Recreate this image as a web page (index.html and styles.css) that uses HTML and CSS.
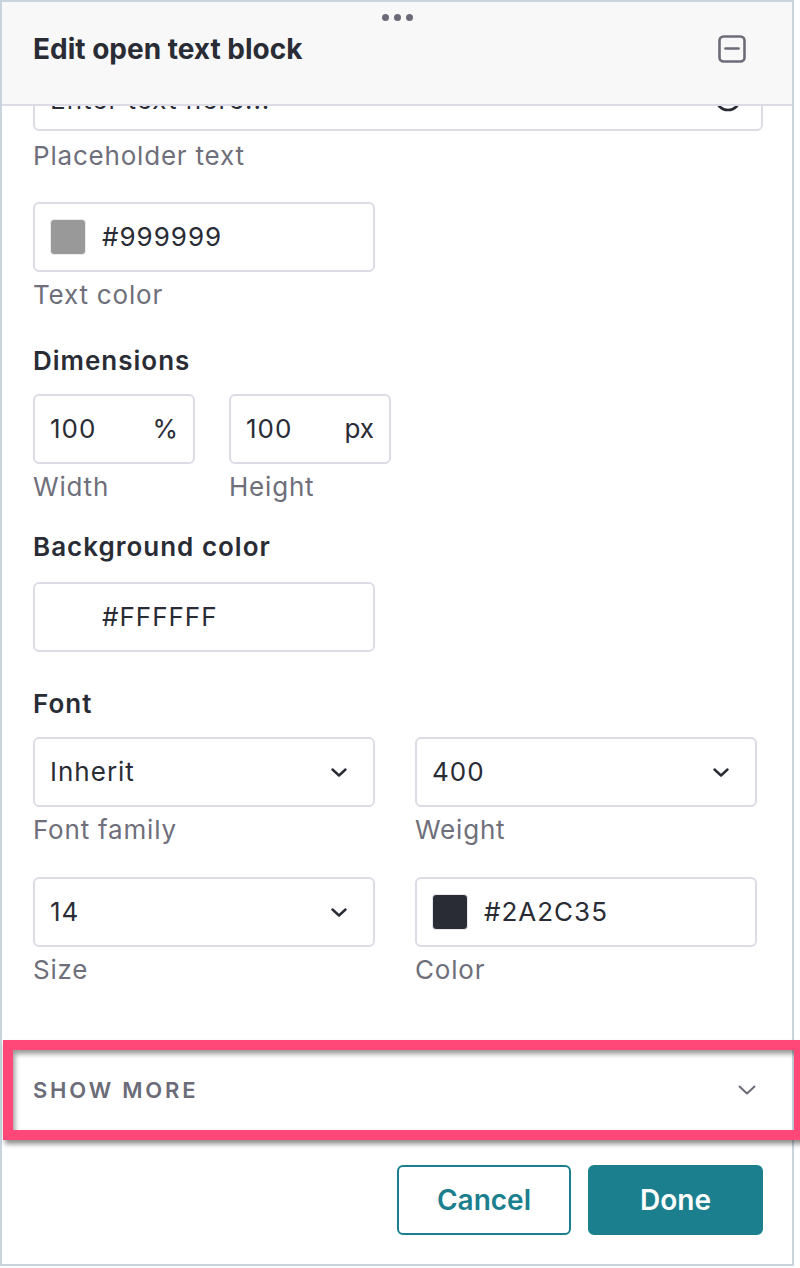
FILE: index.html
```html
<!DOCTYPE html>
<html lang="en">
<head>
<meta charset="utf-8">
<title>Edit open text block</title>
<link rel="stylesheet" href="styles.css">
</head>
<body>
<div class="panel">
  <header class="header">
    <div class="grip"><span></span><span></span><span></span></div>
    <div class="title-row">
      <h1 class="title">Edit open text block</h1>
      <button class="icon-btn" aria-label="Minimize">
        <svg width="28" height="28" viewBox="0 0 28 28"><rect x="1.5" y="1.5" width="25" height="25" rx="4" fill="none" stroke="#6b6c78" stroke-width="2.6"/><line x1="7.5" y1="13.5" x2="20.5" y2="13.5" stroke="#6b6c78" stroke-width="2.6" stroke-linecap="round"/></svg>
      </button>
    </div>
  </header>

  <main class="body">
    <div class="content">
      <div class="input input-top">
        <span class="value">Enter text here...</span>
        <svg class="circle-icon" width="28" height="28" viewBox="0 0 28 28"><circle cx="14" cy="14" r="12" fill="none" stroke="#2a2c35" stroke-width="2.6"/></svg>
      </div>
      <div class="label label-first">Placeholder text</div>

      <div class="input input-narrow mt30">
        <span class="swatch swatch-grey"></span>
        <span class="value">#999999</span>
      </div>
      <div class="label">Text color</div>

      <h2 class="heading mt32">Dimensions</h2>
      <div class="dims">
        <div class="field">
          <div class="input input-unit"><span class="value">100</span><span class="unit">%</span></div>
          <div class="label">Width</div>
        </div>
        <div class="field">
          <div class="input input-unit"><span class="value">100</span><span class="unit">px</span></div>
          <div class="label">Height</div>
        </div>
      </div>

      <h2 class="heading mt26">Background color</h2>
      <div class="input input-narrow mt17">
        <span class="swatch swatch-white"></span>
        <span class="value">#FFFFFF</span>
      </div>

      <h2 class="heading mt34">Font</h2>
      <div class="font-grid">
        <div class="field">
          <div class="input select"><span class="value">Inherit</span>
            <svg class="chev" width="16" height="9" viewBox="0 0 16 9"><path d="M1.5 1.5 L8 7.5 L14.5 1.5" fill="none" stroke="#2a2c35" stroke-width="2.4" stroke-linecap="round" stroke-linejoin="round"/></svg>
          </div>
          <div class="label">Font family</div>
        </div>
        <div class="field">
          <div class="input select"><span class="value">400</span>
            <svg class="chev" width="16" height="9" viewBox="0 0 16 9"><path d="M1.5 1.5 L8 7.5 L14.5 1.5" fill="none" stroke="#2a2c35" stroke-width="2.4" stroke-linecap="round" stroke-linejoin="round"/></svg>
          </div>
          <div class="label">Weight</div>
        </div>
        <div class="field row2">
          <div class="input select"><span class="value">14</span>
            <svg class="chev" width="16" height="9" viewBox="0 0 16 9"><path d="M1.5 1.5 L8 7.5 L14.5 1.5" fill="none" stroke="#2a2c35" stroke-width="2.4" stroke-linecap="round" stroke-linejoin="round"/></svg>
          </div>
          <div class="label">Size</div>
        </div>
        <div class="field row2">
          <div class="input"><span class="swatch swatch-dark"></span><span class="value">#2A2C35</span></div>
          <div class="label">Color</div>
        </div>
      </div>
    </div>
  </main>

  <section class="show-more">
    <span class="show-more-text">SHOW MORE</span>
    <svg class="show-chev" width="18" height="10" viewBox="0 0 18 10"><path d="M1.5 1.5 L9 8.5 L16.5 1.5" fill="none" stroke="#6b6c78" stroke-width="2" stroke-linecap="round" stroke-linejoin="round"/></svg>
    <div class="highlight"></div>
  </section>

  <footer class="footer">
    <button class="btn btn-outline">Cancel</button>
    <button class="btn btn-primary">Done</button>
  </footer>
</div>
</body>
</html>
```

FILE: styles.css
```css
html, body {
  margin: 0;
  padding: 0;
  background: #ffffff;
  overflow: hidden;
}

body {
  font-family: Inter, "Noto Sans", "Liberation Sans", sans-serif;
  color: #2a2c35;
  width: 800px;
  height: 1268px;
}

.panel {
  box-sizing: border-box;
  width: 794px;
  height: 1266px;
  border: 2px solid #c8d5df;
  display: flex;
  flex-direction: column;
  background: #ffffff;
}

/* Header */
.header {
  flex: 0 0 auto;
  box-sizing: border-box;
  height: 104px;
  background: #f8f8f8;
  border-bottom: 2px solid #dddce6;
  padding: 12px 0 0 31px;
}

.grip {
  display: flex;
  justify-content: center;
  gap: 5px;
  height: 7px;
  padding-right: 31px;
}

.grip span {
  width: 7px;
  height: 7px;
  border-radius: 50%;
  background: #6b6c78;
}

.title-row {
  margin-top: 10px;
  height: 36px;
  display: flex;
  align-items: center;
  justify-content: space-between;
}

.title {
  margin: 0;
  font-size: 28px;
  line-height: 36px;
  font-weight: 700;
  color: #2a2c35;
  letter-spacing: 0;
}

.icon-btn {
  border: 0;
  padding: 0;
  background: none;
  width: 28px;
  height: 28px;
  margin-right: 46px;
  display: flex;
}

/* Body */
.body {
  flex: 1 1 auto;
  overflow: hidden;
  padding: 0 29px 0 31px;
}

.content {
  margin-top: -45px;
}

.input {
  box-sizing: border-box;
  height: 70px;
  border: 2px solid #dddce6;
  border-radius: 6px;
  display: flex;
  align-items: center;
  padding: 0 16px 0 15px;
  background: #ffffff;
}

.value {
  font-size: 26px;
  line-height: 32px;
  letter-spacing: 1px;
  color: #2a2c35;
}

.input-top {
  align-items: flex-start;
  padding-top: 21px;
  padding-right: 19px;
  justify-content: space-between;
}

.circle-icon {
  margin-top: 0;
}

.input-narrow {
  width: 342px;
}

.swatch {
  box-sizing: border-box;
  width: 36px;
  height: 36px;
  border-radius: 4px;
  margin-right: 16px;
  flex: 0 0 auto;
}

.swatch-grey {
  background: #999999;
  border: 1px solid #ececec;
}

.swatch-white {
  background: #ffffff;
  border: 1px solid #ffffff;
}

.swatch-dark {
  background: #2a2c35;
  border: 1px solid #e8e8ee;
}

.label {
  font-size: 26px;
  line-height: 32px;
  letter-spacing: 0.8px;
  color: #6e6f7b;
  margin-top: 7px;
}

.label-first {
  margin-top: 9px;
}

.heading {
  margin: 0;
  font-size: 26px;
  line-height: 36px;
  font-weight: 600;
  letter-spacing: 1px;
  color: #2a2c35;
}

.mt30 { margin-top: 30px; }
.mt32 { margin-top: 32px; }
.mt26 { margin-top: 26px; }
.mt17 { margin-top: 17px; }
.mt34 { margin-top: 34px; }

.dims {
  display: flex;
  gap: 34px;
  margin-top: 15px;
}

.input-unit {
  width: 162px;
  justify-content: space-between;
  padding-right: 15px;
}

.unit {
  font-size: 26px;
  line-height: 32px;
  color: #2a2c35;
}

.font-grid {
  display: grid;
  grid-template-columns: 342px 342px;
  column-gap: 40px;
  margin-top: 15px;
}

.row2 {
  margin-top: 31px;
}

.select {
  justify-content: space-between;
  padding-right: 26px;
}

/* Show more */
.show-more {
  position: relative;
  flex: 0 0 auto;
  box-sizing: border-box;
  height: 100px;
  display: flex;
  align-items: center;
  justify-content: space-between;
  padding: 0 36px 0 31px;
}

.show-more-text {
  font-size: 22px;
  line-height: 28px;
  font-weight: 600;
  letter-spacing: 2.8px;
  color: #6b6c78;
}

.highlight {
  position: absolute;
  top: 0;
  left: 1px;
  right: -12px;
  height: 100px;
  box-sizing: border-box;
  border: 10px solid #ff4778;
  box-shadow: 2px 4px 5px rgba(0, 0, 0, 0.45), inset 2px 4px 5px rgba(0, 0, 0, 0.4);
  pointer-events: none;
}

/* Footer */
.footer {
  flex: 0 0 auto;
  box-sizing: border-box;
  height: 124px;
  display: flex;
  justify-content: flex-end;
  align-items: flex-start;
  gap: 17px;
  padding: 25px 29px 0 0;
}

.btn {
  box-sizing: border-box;
  height: 70px;
  border-radius: 6px;
  font-family: Inter, "Noto Sans", "Liberation Sans", sans-serif;
  font-size: 28px;
  font-weight: 600;
  cursor: pointer;
}

.btn-outline {
  width: 174px;
  background: #ffffff;
  color: #1b7f8e;
  border: 2px solid #1b7f8e;
}

.btn-primary {
  width: 175px;
  background: #1b7f8e;
  color: #ffffff;
  border: 2px solid #1b7f8e;
}
```
